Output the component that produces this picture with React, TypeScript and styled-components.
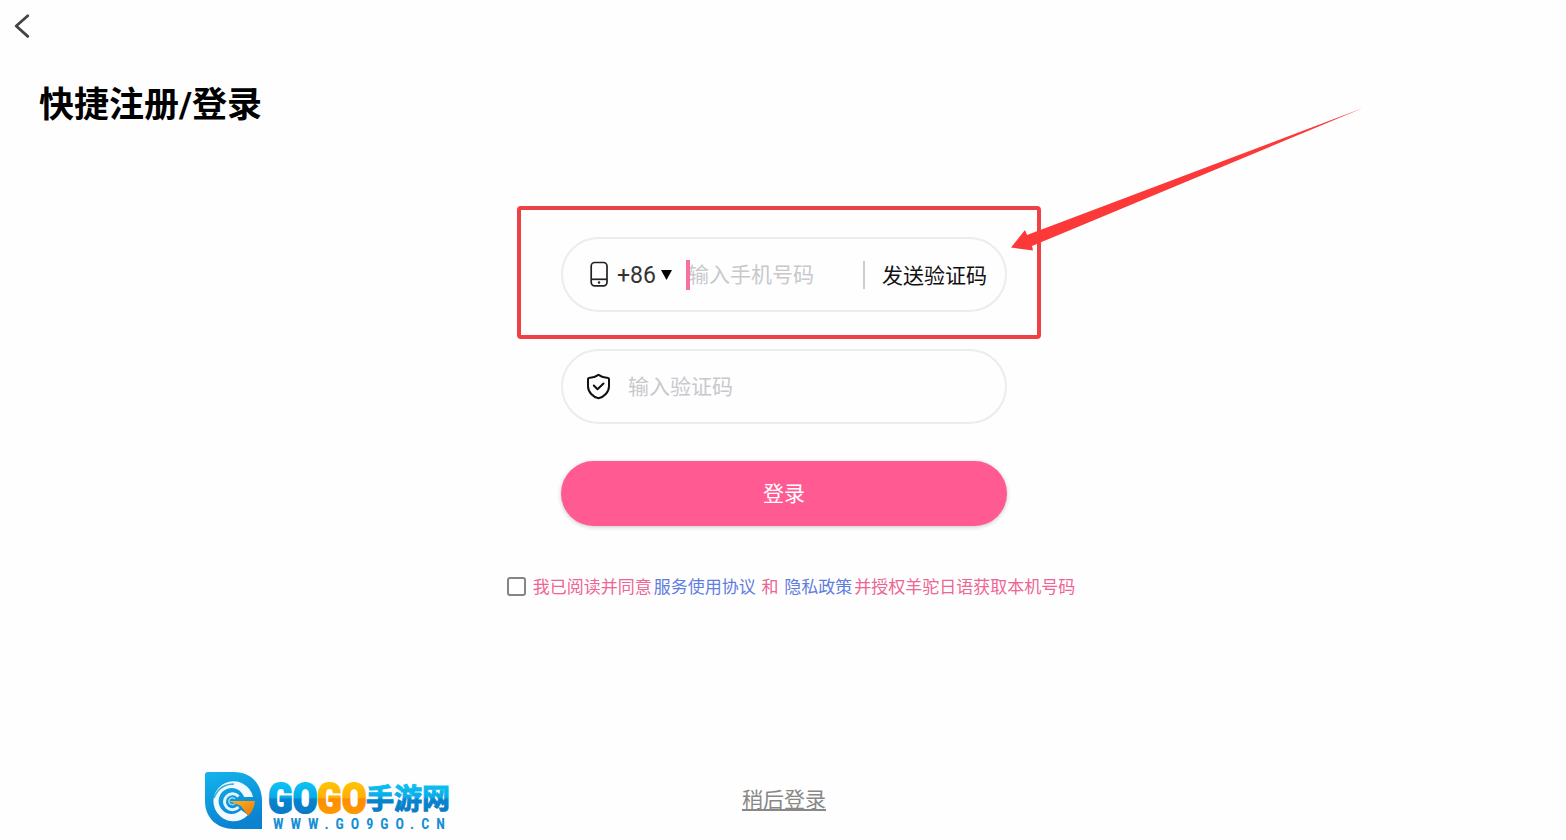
import React, { useState } from "react";
import styled, { createGlobalStyle } from "styled-components";

const GlobalStyle = createGlobalStyle`
  *, *::before, *::after { box-sizing: border-box; }
  body {
    margin: 0;
    background: #fefefe;
    color: #111;
    font-family: "Noto Sans CJK SC", sans-serif;
  }
  button, input, select { font-family: inherit; }
`;

const Page = styled.div`
  position: relative;
  display: flex;
  flex-direction: column;
  min-height: 100vh;
  overflow: hidden;
`;

const TopBar = styled.header`
  display: flex;
  align-items: center;
  height: 52px;
  padding: 0 8px;
`;

const BackButton = styled.button`
  display: flex;
  padding: 0;
  border: 0;
  background: none;
  cursor: pointer;
`;

const Title = styled.h1`
  margin: 28px 39px 0;
  font-family: Roboto, "Noto Sans CJK SC", sans-serif;
  font-size: 35px;
  line-height: 52px;
  font-weight: 700;
  color: #000;
`;

const Form = styled.form`
  display: flex;
  flex-direction: column;
  align-items: center;
  padding: 105px 0 0 2px;
`;

const Field = styled.div`
  position: relative;
  display: flex;
  align-items: center;
  width: 446px;
  max-width: 100%;
  height: 75px;
  margin-bottom: 37px;
  padding: 0 18px 0 24px;
  border: 2px solid #ececec;
  border-radius: 38px;
`;

const TextInput = styled.input`
  flex: 1;
  min-width: 0;
  height: 40px;
  padding: 0 0 4px;
  border: 0;
  outline: 0;
  background: none;
  font-size: 21px;
  color: #222;
  &::placeholder { color: #c8c8cd; opacity: 1; }
`;

const CodeEntry = styled(TextInput)`
  margin-left: 17px;
`;

const CodePicker = styled.div`
  display: flex;
  align-items: center;
  gap: 3px;
  margin: 0 15px 0 6px;
`;

const CodeSelect = styled.select`
  appearance: none;
  width: 41px;
  height: 36px;
  padding: 2px 0 0;
  border: 0;
  background: none;
  font-family: Roboto, sans-serif;
  font-size: 23px;
  color: #333;
`;

const PhoneEntry = styled.div`
  position: relative;
  display: flex;
  flex: 1;
  min-width: 0;
`;

const Caret = styled.span`
  position: absolute;
  left: -2px;
  top: 5px;
  width: 4px;
  height: 30px;
  background: #f9709f;
`;

const SendButton = styled.button`
  display: flex;
  align-items: center;
  height: 28px;
  padding: 0 0 2px 17px;
  border: 0;
  border-left: 2px solid #ccc;
  background: none;
  font-size: 21px;
  line-height: 26px;
  color: #111;
  white-space: nowrap;
`;

const Highlight = styled.span`
  position: absolute;
  inset: -33px -36px -29px -46px;
  border: 4px solid #ee4145;
  border-radius: 4px;
  pointer-events: none;
`;

const Arrow = styled.svg`
  position: absolute;
  left: 440px;
  top: -140px;
  pointer-events: none;
`;

const LoginButton = styled.button`
  width: 446px;
  max-width: 100%;
  height: 65px;
  padding: 0 0 4px;
  border: 0;
  border-radius: 33px;
  background: #ff5a91;
  box-shadow: 0 1px 4px rgba(0, 0, 0, 0.22);
  color: #fff;
  font-size: 21px;
`;

const Agreement = styled.div`
  display: flex;
  align-items: center;
  gap: 7px;
  margin: 47px 0 0 14px;
  font-size: 17px;
  line-height: 26px;
  color: #ee6593;
  white-space: nowrap;
`;

const CheckBox = styled.input`
  appearance: none;
  width: 19px;
  height: 19px;
  margin: 0;
  border: 2px solid #858585;
  border-radius: 3px;
  background: #fff;
  &:checked { background: #ff5a91; }
`;

const PolicyLink = styled.a`
  margin: 0 2px;
  color: #5f7de0;
  text-decoration: none;
`;

const Footer = styled.footer`
  display: flex;
  justify-content: center;
  margin-top: auto;
  padding: 40px 0 26px 2px;
`;

const LaterLink = styled.a`
  font-size: 21px;
  line-height: 32px;
  color: #888;
  text-underline-offset: 2px;
`;

const Brand = styled.div`
  position: absolute;
  left: 205px;
  bottom: 10px;
  display: flex;
  align-items: flex-end;
  gap: 5px;
`;

const BrandText = styled.div`
  display: flex;
  flex-direction: column;
`;

const BrandName = styled.svg`
  display: block;
  overflow: visible;
  font-weight: 700;
`;

const BrandLatin = styled.text`
  font-family: "Roboto Condensed", "Liberation Sans Narrow", sans-serif;
`;

const BrandUrl = styled.span`
  padding-left: 5px;
  font-family: "Liberation Sans Narrow", "Roboto Condensed", sans-serif;
  font-size: 14px;
  line-height: 12px;
  letter-spacing: 7px;
  font-weight: 700;
  color: #168fd2;
`;

function BackIcon() {
  return (
    <svg width="28" height="28" viewBox="0 0 28 28" fill="none" stroke="#444" strokeWidth="2.8">
      <path d="M19.800 3.800 8.200 14l11.600 10.400" strokeLinecap="round" strokeLinejoin="round" />
    </svg>
  );
}

function PhoneIcon() {
  return (
    <svg width="24" height="28" viewBox="0 0 24 28" fill="none" stroke="#222" strokeWidth="1.7">
      <rect x="4.2" y="1.5" width="15.8" height="23.3" rx="3.5" />
      <path d="M4.2 18.3H20" />
      <circle cx="12" cy="21.5" r="1.2" fill="#222" stroke="none" />
    </svg>
  );
}

function ShieldIcon() {
  return (
    <svg width="24" height="28" viewBox="0 0 24 28" fill="none" stroke="#111" strokeWidth="2" strokeLinecap="round" strokeLinejoin="round">
      <path d="M11.500 1.800C14.500 4.100 17.500 4.900 21.200 4.900Q22 5 22 6V13.300C22 19.100 17 24.100 11.500 25.300C6 24.100 1 19.100 1 13.300V6Q1 5 1.800 4.900C5.500 4.900 8.500 4.100 11.500 1.800Z" />
      <path d="m6.800 12.500 3.700 3.800 6-5.800" />
    </svg>
  );
}

function BrandMark() {
  return (
    <svg width="58" height="58" viewBox="0 0 58 58">
      <defs>
        <linearGradient id="markBlue" x1="0" y1="0" x2="0.3" y2="1">
          <stop offset="0" stopColor="#14b4ec" />
          <stop offset="1" stopColor="#0a82d0" />
        </linearGradient>
        <linearGradient id="markOrange" x1="0" y1="0" x2="1" y2="1">
          <stop offset="0" stopColor="#ffb321" />
          <stop offset="1" stopColor="#e87808" />
        </linearGradient>
      </defs>
      <path d="M0 3Q0 0 3 0H29C46 0 57 12 57 29V57H29C12 57 0 46 0 29Z" fill="url(#markBlue)" />
      <path d="M48 25A20 20 0 1 0 43 43L36 38A13 13 0 1 1 39 25Z" fill="#f1fbff" />
      <path d="M9 26C13 16 20 12 29 12" fill="none" stroke="#33aee1" strokeWidth="1.5" />
      <path d="M33.500 24.500A8 8 0 1 0 33.500 35" fill="none" stroke="#e2f6fd" strokeWidth="3" />
      <path d="M30 27A3.500 3.500 0 1 0 30 31.500" fill="none" stroke="#8fd8f5" strokeWidth="1.5" />
      <path d="M24 29H50C49 36 47 40 43 44L36 34Z" fill="url(#markOrange)" />
    </svg>
  );
}

function BrandLogo() {
  return (
    <Brand>
      <BrandMark />
      <BrandText>
        <BrandName width="184" height="46" viewBox="0 0 184 46">
          <defs>
            <linearGradient id="nameBlue" x1="0" y1="8" x2="0" y2="44" gradientUnits="userSpaceOnUse">
              <stop offset="0" stopColor="#0cc8f5" />
              <stop offset="0.5" stopColor="#08a9e8" />
              <stop offset="0.52" stopColor="#0785cf" />
              <stop offset="1" stopColor="#0878c4" />
            </linearGradient>
            <linearGradient id="nameOrange" x1="0" y1="8" x2="0" y2="44" gradientUnits="userSpaceOnUse">
              <stop offset="0" stopColor="#ffc800" />
              <stop offset="0.5" stopColor="#ffae08" />
              <stop offset="0.52" stopColor="#ff8c00" />
              <stop offset="1" stopColor="#ff9c00" />
            </linearGradient>
          </defs>
          <BrandLatin x="0" y="41" fontSize="42" fill="url(#nameBlue)" stroke="url(#nameBlue)" strokeWidth="2">GO</BrandLatin>
          <BrandLatin x="49" y="41" fontSize="42" fill="url(#nameOrange)" stroke="url(#nameOrange)" strokeWidth="2">GO</BrandLatin>
          <text x="98" y="37" fontSize="28" fill="url(#nameBlue)" stroke="url(#nameBlue)" strokeWidth="1">手游网</text>
        </BrandName>
        <BrandUrl>WWW.GO9GO.CN</BrandUrl>
      </BrandText>
    </Brand>
  );
}

export default function App() {
  const [agreed, setAgreed] = useState(false);

  return (
    <Page>
      <GlobalStyle />
      <TopBar>
        <BackButton type="button" aria-label="返回"><BackIcon /></BackButton>
      </TopBar>
      <Title>快捷注册/登录</Title>

      <Form onSubmit={(event) => event.preventDefault()}>
        <Field>
          <PhoneIcon />
          <CodePicker>
            <CodeSelect aria-label="国家区号" defaultValue="+86">
              <option>+86</option>
            </CodeSelect>
            <svg width="12" height="12" viewBox="0 0 12 12"><path d="M0 1h11L5.500 11Z" fill="#000" /></svg>
          </CodePicker>
          <PhoneEntry>
            <TextInput type="tel" aria-label="手机号码" placeholder="输入手机号码" />
            <Caret />
          </PhoneEntry>
          <SendButton type="button">发送验证码</SendButton>
          <Highlight />
          <Arrow width="370" height="160" viewBox="0 0 370 160">
            <path d="M8 148.500 22 131 24 136 360 9 29 147 30 151.500Z" fill="#fc3838" />
          </Arrow>
        </Field>

        <Field as="label">
          <ShieldIcon />
          <CodeEntry type="text" aria-label="验证码" placeholder="输入验证码" />
        </Field>

        <LoginButton type="submit">登录</LoginButton>

        <Agreement>
          <CheckBox id="agree" type="checkbox" checked={agreed} onChange={(event) => setAgreed(event.target.checked)} />
          <label htmlFor="agree">
            我已阅读并同意<PolicyLink href="#terms">服务使用协议</PolicyLink> 和 <PolicyLink href="#privacy">隐私政策</PolicyLink>并授权羊驼日语获取本机号码
          </label>
        </Agreement>
      </Form>

      <Footer>
        <LaterLink href="#later">稍后登录</LaterLink>
      </Footer>
      <BrandLogo />
    </Page>
  );
}
